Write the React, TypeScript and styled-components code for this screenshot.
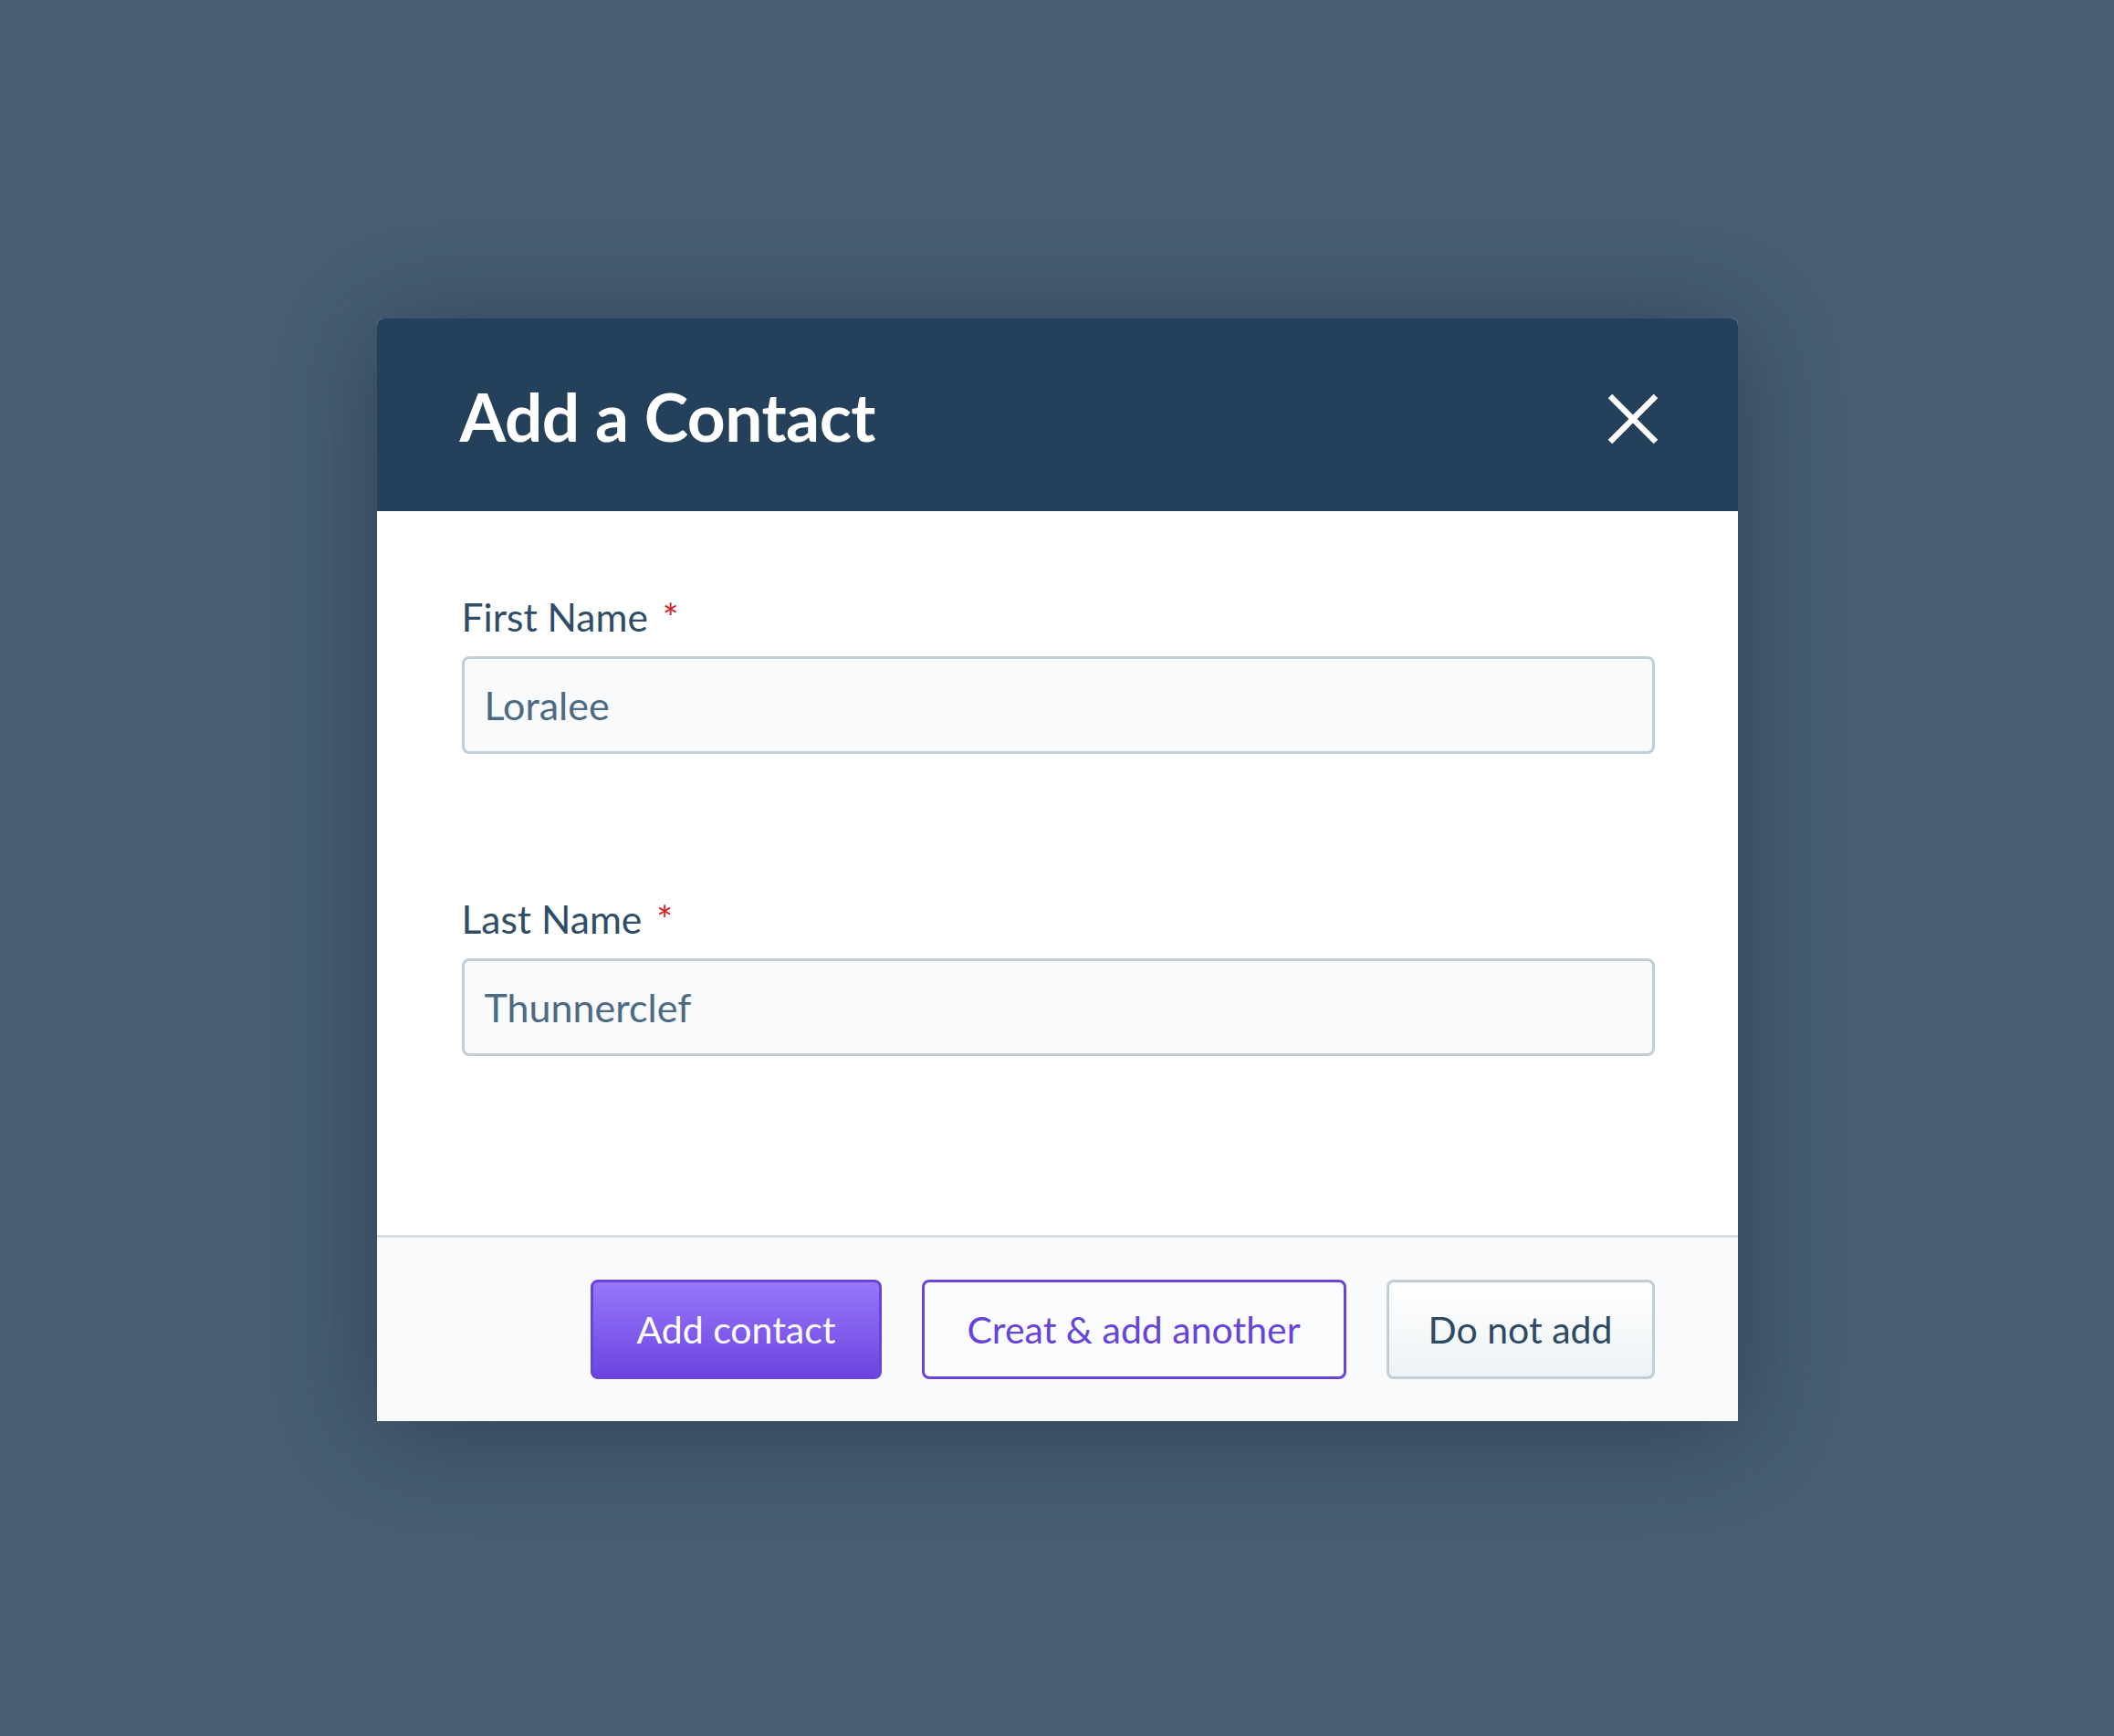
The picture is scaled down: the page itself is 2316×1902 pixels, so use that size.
import React from "react";
import styled, { createGlobalStyle } from "styled-components";

const GlobalStyle = createGlobalStyle`
  html, body { margin: 0; padding: 0; }
  body {
    background: #475e74;
    font-family: Lato, "Open Sans", "Liberation Sans", sans-serif;
  }
  * { box-sizing: border-box; }
`;

const Page = styled.div`
  min-height: 100vh;
  display: flex;
  align-items: center;
  justify-content: center;
  padding-top: 3px;
  background: #475e74;
`;

const Modal = styled.div`
  width: 1491px;
  display: flex;
  flex-direction: column;
  border-radius: 7px 7px 0 0;
  overflow: hidden;
  box-shadow: 0 10px 120px rgba(25, 40, 56, 0.55);
  background: #ffffff;
`;

const Header = styled.div`
  height: 211px;
  background: #25405a;
  display: flex;
  align-items: center;
  justify-content: space-between;
  padding: 5px 87px 0 91px;
`;

const Title = styled.h1`
  margin: 0;
  color: #ffffff;
  font-size: 73px;
  font-weight: 700;
  letter-spacing: -0.5px;
  line-height: 1;
`;

const CloseButton = styled.button`
  width: 56px;
  height: 56px;
  padding: 0;
  margin-top: 4px;
  border: none;
  background: transparent;
  display: flex;
  align-items: center;
  justify-content: center;
  cursor: pointer;
`;

const Body = styled.div`
  height: 793px;
  padding: 90px 91px 0 93px;
  display: flex;
  flex-direction: column;
  gap: 155px;
`;

const Field = styled.div`
  display: flex;
  flex-direction: column;
  gap: 17px;
`;

const Label = styled.label`
  font-size: 42.5px;
  line-height: 52px;
  color: #2f4d66;
  display: flex;
  align-items: baseline;
`;

const Required = styled.span`
  color: #d0262b;
  font-size: 42px;
  margin-left: 16px;
`;

const Input = styled.input`
  height: 107px;
  width: 100%;
  border: 3px solid #c0ced9;
  border-radius: 8px;
  background: #f8fafc;
  padding: 0 22px;
  font-family: inherit;
  font-size: 43px;
  color: #4c6a84;
  outline: none;
`;

const Footer = styled.div`
  height: 204px;
  border-top: 3px solid #d5dfe5;
  background: #f8fafc;
  display: flex;
  align-items: center;
  justify-content: flex-end;
  gap: 44px;
  padding: 0 91px 0 0;
`;

const Button = styled.button<{ $variant: "primary" | "outline" | "plain" }>`
  height: 109px;
  padding: 0 ${(p) => (p.$variant === "plain" ? "43px" : "47px")};
  border-radius: 8px;
  font-family: inherit;
  font-size: 41px;
  cursor: pointer;
  border: 3px solid
    ${(p) =>
      p.$variant === "plain" ? "#c0ced8" : "#6a44d8"};
  background: ${(p) =>
    p.$variant === "primary"
      ? "linear-gradient(180deg, #9677f9 0%, #6c45e1 100%)"
      : p.$variant === "outline"
      ? "#fafbfd"
      : "linear-gradient(180deg, #ffffff 0%, #edf2f4 100%)"};
  color: ${(p) =>
    p.$variant === "primary"
      ? "#ffffff"
      : p.$variant === "outline"
      ? "#6644d6"
      : "#2d4a63"};
`;

export default function App() {
  return (
    <>
      <GlobalStyle />
      <Page>
        <Modal>
          <Header>
            <Title>Add a Contact</Title>
            <CloseButton aria-label="Close">
              <svg width="56" height="56" viewBox="0 0 56 56">
                <path
                  d="M3 3 L53 53 M53 3 L3 53"
                  stroke="#ffffff"
                  strokeWidth="6.5"
                  strokeLinecap="butt"
                />
              </svg>
            </CloseButton>
          </Header>
          <Body>
            <Field>
              <Label>
                First Name<Required>*</Required>
              </Label>
              <Input defaultValue="Loralee" />
            </Field>
            <Field>
              <Label>
                Last Name<Required>*</Required>
              </Label>
              <Input defaultValue="Thunnerclef" />
            </Field>
          </Body>
          <Footer>
            <Button $variant="primary">Add contact</Button>
            <Button $variant="outline">Creat &amp; add another</Button>
            <Button $variant="plain">Do not add</Button>
          </Footer>
        </Modal>
      </Page>
    </>
  );
}
